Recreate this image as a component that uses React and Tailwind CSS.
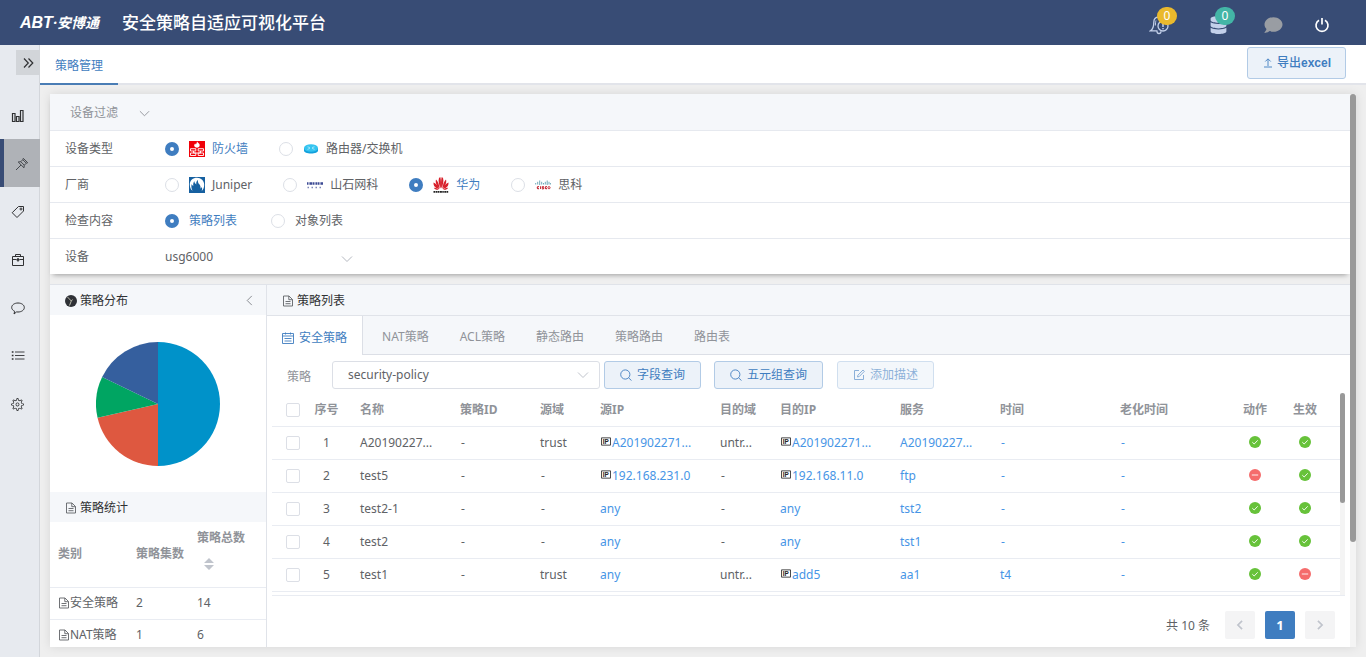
import React from "react";
import { TfiSettings } from "react-icons/tfi";
import { FaDatabase, FaComment } from "react-icons/fa";

const Chevron = ({ className }) => (
  <svg viewBox="0 0 12 12" className={className} fill="none" stroke="currentColor" strokeWidth="1">
    <path d="M1 3.5 6 8.5 11 3.5" />
  </svg>
);

const DocIcon = ({ className }) => (
  <svg viewBox="0 0 12 12" className={className} fill="none" stroke="currentColor" strokeWidth="0.9">
    <path d="M1.500 1h5.500l3.500 3.500v6.500h-9zM6.800 1v3.700h3.700M3.500 6.500h5M3.500 8.700h5" />
  </svg>
);

const PieIcon = () => (
  <svg viewBox="0 0 12 12" className="h-3 w-3">
    <circle cx="6" cy="6" r="6" fill="#2f3136" />
    <path d="M2.500 2 6.300 6 4.500 10.500M6.300 6 7.500 4.500" fill="none" stroke="#c9c9b8" strokeWidth="0.9" />
  </svg>
);

const CalendarIcon = () => (
  <svg viewBox="0 0 12 12" className="h-3 w-3" fill="none" stroke="currentColor" strokeWidth="0.9">
    <path d="M0.500 1.500h11v10H.5zM0.500 4h11M3.500 0.500v2M8.500 0.500v2M2.500 6.500h7M2.500 9h7" />
  </svg>
);

const SearchIcon = () => (
  <svg viewBox="0 0 12 12" className="h-3 w-3" fill="none" stroke="currentColor" strokeWidth="0.9">
    <circle cx="5.300" cy="5.500" r="4.600" />
    <path d="M8.600 8.800 11.500 11.600" />
  </svg>
);

const EditIcon = () => (
  <svg viewBox="0 0 12 12" className="h-3 w-3" fill="none" stroke="currentColor" strokeWidth="1">
    <path d="M6 1.500H1.500v9h9V6M4.500 8l.4-1.800L10 1l1.400 1.300-5.100 5.200z" />
  </svg>
);

const UploadIcon = () => (
  <svg viewBox="0 0 12 12" className="h-3 w-3" fill="none" stroke="currentColor" strokeWidth="0.9">
    <path d="M6 9V2M3.300 4.500 6 1.800l2.700 2.700M2 10h8" />
  </svg>
);

const BellIcon = () => (
  <svg viewBox="0 0 20 20" className="h-5 w-5" fill="none" stroke="#c3d0ea" strokeWidth="1.300">
    <path d="M13 4.500C12.200 3 11 2.200 9.500 2.200 6.500 2.200 4.800 4.500 4.800 7.500c0 4-.6 6.500-3.300 8.300h7M8 16.200c0 1.500.8 2.300 2 2.300s2-.8 2-2.300" />
    <path d="M7 5.500c-.5 1-.5 3-.6 5" strokeWidth="1" />
    <circle cx="14" cy="11" r="5" />
    <path d="M14 8v4M14 13v1.200" strokeWidth="1.500" />
  </svg>
);

const PowerIcon = () => (
  <svg viewBox="0 0 16 16" className="h-4 w-4" fill="none" stroke="#fff" strokeWidth="1.700">
    <path d="M5 3.200a6 6 0 1 0 6 0M8 1v6.500" />
  </svg>
);

const Stroke = ({ children }) => (
  <svg viewBox="0 0 14 14" className="h-[14px] w-[14px]" fill="none" stroke="currentColor" strokeWidth="1">
    {children}
  </svg>
);

const BarsIcon = () => (
  <Stroke>
    <path d="M1.500 4.500h2.500v8H1.500zM5.500 7.500H8v5H5.500zM9.500 1.500H12v11H9.500z" strokeWidth="1.200" />
  </Stroke>
);

const PinIcon = () => (
  <Stroke>
    <path d="M8.300 1.300 12.700 5.700 11.300 6.200 9.300 8.200 9 10.800 3.200 5 5.800 4.700 7.800 2.700zM6 8 1 13M7.800 2.700l3.500 3.500M5.800 4.700 9.300 8.200" />
  </Stroke>
);

const TagIcon = () => (
  <Stroke>
    <path d="M7.500 1.500h5v4.500L6 12.500 1.200 7.700z" strokeLinejoin="round" />
    <circle cx="10" cy="4" r="1" />
  </Stroke>
);

const BriefcaseIcon = () => (
  <Stroke>
    <path d="M1.500 3.500h11v9h-11zM4.500 3.500v-2h5v2M1.500 6.500h4M8.500 6.500h4" />
    <path d="M7 5v3.500M5.500 6.700h3" strokeWidth="1.500" />
  </Stroke>
);

const BubbleIcon = () => (
  <Stroke>
    <path d="M3.700 10.300C1.800 9.500.7 8 .7 6.500.7 3.900 3.500 2 7 2s6.300 1.900 6.300 4.500S10.500 11 7 11c-.5 0-1 0-1.400-.1L3 13z" strokeLinejoin="round" />
  </Stroke>
);

const ListIcon = () => (
  <Stroke>
    <path d="M4 3h9.500M4 6.500h9.500M4 10h9.500" strokeWidth="0.900" />
    <path d="M.8 3h1.700M.8 6.500h1.700M.8 10h1.700" strokeWidth="1.500" />
  </Stroke>
);

const GearIcon = () => <TfiSettings className="h-[13px] w-[13px]" />;

const FirewallIcon = () => (
  <svg viewBox="0 0 16 16" className="h-4 w-4">
    <path d="M0 0h16v16H0z" fill="#f00008" />
    <path d="M8 .3c.3 1.300 3.300 2.200 2.600 4.500C10.200 6.200 9 6.700 8 6.700S5.600 6.200 5.200 4.800c-.2-1 .6-1.600.9-2.300.4.400.6.700.8 1C7.600 2.700 7.900 1.600 8 .3z" fill="#fff" />
    <path d="M1.500 7.700h5.300v2.300H1.500zM9.200 7.700h5.300v2.300H9.200zM4.500 10v2h7v-2M1.500 12h5.300v2.500H1.500zM9.200 12h5.300v2.500H9.200z" fill="none" stroke="#fff" strokeWidth="0.900" />
  </svg>
);

const RouterIcon = () => (
  <svg viewBox="0 0 16 16" className="h-4 w-4">
    <path d="M1 7v2.500C1 11.500 4 12.500 8 12.500s7-1 7-3V7z" fill="#12a0dc" />
    <ellipse cx="8" cy="7" rx="7" ry="3.800" fill="#35c4f0" />
    <path d="M4.500 5.800 7 6.600M11.500 5.800 9 6.600M4.500 8.300 7 7.400M11.500 8.300 9 7.400" stroke="#a5e8fb" strokeWidth="0.900" />
  </svg>
);

const JuniperIcon = () => (
  <svg viewBox="0 0 16 16" className="h-4 w-4">
    <path d="M0 0h16v16H0z" fill="#1660a0" />
    <path d="M.8 7.500C.8 3.500 4 .8 8 .8s7.200 3 7.200 7c0 2.800-1 5-2.700 6.500.8-1.500.8-2.800.3-4.300-.4 1-.8 1.200-1.300 1.500.3-2-.3-3.500-1.500-4.500-.8-1-1.300-2.200-1-4C7.500 4 7 5.500 7.300 7.500 6.300 6.500 5.300 5.500 5.200 4 4.500 5.500 4 7 4.300 9 3.500 8.500 3 8 2.700 7c-.6 2-.4 4.500.8 6.800C1.800 12.500.8 10.200.8 7.500z" fill="#fff" />
  </svg>
);

const HillstoneIcon = () => (
  <svg viewBox="0 0 16 16" className="h-4 w-4">
    <path d="M0 6.500h16" stroke="#3c4a94" strokeWidth="2.600" strokeDasharray="1.500 0.500 0.600 0.400 2 0.500" />
    <path d="M.5 10.500h15" stroke="#7d86b8" strokeWidth="1.500" strokeDasharray="1.500 2.500" />
  </svg>
);

const HuaweiIcon = () => (
  <svg viewBox="0 0 16 16" className="h-4 w-4">
    <g fill="#d8202b">
      <path d="M7.700 11.500C6 8.500 5 4 6 1 6.200.6 7 .3 7.400.3c.6 2.500.8 7.500.3 11.200z" />
      <path d="M8.300 11.500C10 8.500 11 4 10 1 9.800.6 9 .3 8.600.3 8 2.800 7.800 7.800 8.300 11.500z" />
      <path d="M6.800 11.700C4 9.500 2 6 3 2.500 4.800 4 6.300 8 6.800 11.700zM9.200 11.700C12 9.500 14 6 13 2.500 11.200 4 9.700 8 9.200 11.700z" />
      <path d="M6.200 12C3 11.500.3 9.500.5 5.500 3 6.500 5.300 9 6.200 12zM9.800 12c3.200-.5 5.900-2.500 5.700-6.500-2.500 1-4.800 3.500-5.700 6.500z" />
      <path d="M5.800 12.600c-2 .6-3.800 0-5-1.900 1.800-.2 3.600.6 5 1.900zM10.200 12.600c2 .6 3.800 0 5-1.900-1.800-.2-3.600.6-5 1.900z" />
    </g>
    <path d="M.5 14.800h15" stroke="#222" strokeWidth="1.700" strokeDasharray="1.500 0.500 2 0.400" />
  </svg>
);

const CiscoIcon = () => (
  <svg viewBox="0 0 16 16" className="h-4 w-4" fill="none">
    <path d="M.7 6v1.500M2.700 4.800v2.700M4.700 3.500v4.500M6.700 4.800v2.700M8.500 6v1.500M10.300 4.800v2.700M12.200 3.500v4.500M14 4.800v2.700M15.600 6v1.500" stroke="#5f9fb0" strokeWidth="0.900" />
    <path d="M4 9.700c-2-.5-2.500 2.300 0 2M5.600 9.300v2.700M8.800 9.700c-1.700-.4-1.700.7-.7 1 1 .4.6 1.400-1 1M12 9.700c-2-.5-2.500 2.300 0 2" stroke="#c8323c" strokeWidth="1.200" />
    <circle cx="14" cy="10.700" r="1.100" stroke="#c8323c" />
  </svg>
);

const OkIcon = () => (
  <svg viewBox="0 0 12 12" className="mx-auto mb-0.5 h-3 w-3" role="img" aria-label="ok">
    <circle cx="6" cy="6" r="6" fill="#67c23a" />
    <path d="M3.300 6.200 5.200 8 8.700 4.300" fill="none" stroke="#fff" strokeWidth="0.900" />
  </svg>
);

const NoIcon = () => (
  <svg viewBox="0 0 12 12" className="mx-auto mb-0.5 h-3 w-3" role="img" aria-label="no">
    <circle cx="6" cy="6" r="6" fill="#f56c6c" />
    <path d="M2.800 6h6.400" stroke="#fff" strokeWidth="0.900" />
  </svg>
);

const navItems = [
  { icon: BarsIcon, label: "bar chart" },
  { icon: PinIcon, label: "pin", active: true },
  { icon: TagIcon, label: "tag" },
  { icon: BriefcaseIcon, label: "briefcase" },
  { icon: BubbleIcon, label: "comment" },
  { icon: ListIcon, label: "list" },
  { icon: GearIcon, label: "settings" },
];

const distribution = [
  { value: 14, color: "#0092c9" },
  { value: 6, color: "#de5840" },
  { value: 3, color: "#00a562" },
  { value: 5, color: "#355f9e" },
];

function PieChart() {
  const total = distribution.reduce((sum, d) => sum + d.value, 0);
  const point = (v) => {
    const a = (v / total) * Math.PI * 2;
    return `${62 + 62 * Math.sin(a)} ${62 - 62 * Math.cos(a)}`;
  };
  let start = 0;
  return (
    <svg viewBox="0 0 124 124" className="h-[124px] w-[124px]">
      {distribution.map((d) => {
        const from = start;
        start += d.value;
        return <path key={d.color} fill={d.color} d={`M62 62L${point(from)}A62 62 0 0 1 ${point(start)}Z`} />;
      })}
    </svg>
  );
}

function Radio({ name, label, icon: Icon, checked }) {
  return (
    <label className={`flex items-center ${checked ? "text-[#3f7dc0]" : "text-[#606266]"}`}>
      <input
        type="radio"
        name={name}
        defaultChecked={checked}
        className="mr-[10px] h-[14px] w-[14px] appearance-none rounded-full border border-[#dcdfe6] bg-white checked:border-[5px] checked:border-[#3f7dc0]"
      />
      {Icon && (
        <span className="mr-[7px]">
          <Icon />
        </span>
      )}
      {label}
    </label>
  );
}

function FilterRow({ label, children, gap = "gap-[31px]" }) {
  return (
    <div className="flex h-9 items-center border-t border-[#e6e9ef] pl-[15px]">
      <span className="w-[100px] text-[#606266]">{label}</span>
      <div className={`flex items-center ${gap}`}>{children}</div>
    </div>
  );
}

const IpBadge = () => (
  <svg viewBox="0 0 11 9" className="mr-px mb-1 ml-px inline-block h-[9px] w-[10px]">
    <path d="M.5.5h10v8H.5z" fill="#fff" stroke="#333" />
    <text x="2" y="7" fontSize="7" fontWeight="700" fontFamily="Liberation Sans, sans-serif" fill="#222">IP</text>
  </svg>
);

const columns = ["序号", "名称", "策略ID", "源域", "源IP", "目的域", "目的IP", "服务", "时间", "老化时间", "动作", "生效"];

const rows = [
  { name: "A20190227...", srcZone: "trust", src: "A201902271...", srcIp: true, dstZone: "untr...", dst: "A201902271...", dstIp: true, service: "A20190227...", time: "-", action: true, active: true },
  { name: "test5", srcZone: "-", src: "192.168.231.0", srcIp: true, dstZone: "-", dst: "192.168.11.0", dstIp: true, service: "ftp", time: "-", action: false, active: true },
  { name: "test2-1", srcZone: "-", src: "any", dstZone: "-", dst: "any", service: "tst2", time: "-", action: true, active: true },
  { name: "test2", srcZone: "-", src: "any", dstZone: "-", dst: "any", service: "tst1", time: "-", action: true, active: true },
  { name: "test1", srcZone: "trust", src: "any", dstZone: "untr...", dst: "add5", dstIp: true, service: "aa1", time: "t4", action: true, active: false },
];

const Dash = () => <span className="px-px">-</span>;
const Plain = ({ text }) => (text === "-" ? <Dash /> : text);
const Link = ({ text }) => (
  <a href="#" className="text-[#4795e6]">
    <Plain text={text} />
  </a>
);

const Check = ({ label }) => (
  <input
    type="checkbox"
    aria-label={label}
    className="block h-[14px] w-[14px] appearance-none rounded-[2px] border border-[#dcdfe6] bg-white checked:bg-[#3f7dc0]"
  />
);

const queryButton =
  "flex h-7 items-center gap-[5px] rounded-[3px] border border-[#b2cbe6] bg-[#ecf2f9] px-[15px] text-[#3f7dc0]";

function Header() {
  return (
    <header className="flex h-[45px] shrink-0 items-center bg-[#384c75] pl-5 text-white">
      <div className="flex w-[102px] items-center text-sm font-bold italic">
        <span className="font-['Liberation_Sans'] text-base leading-5">ABT</span>
        <span>·安博通</span>
      </div>
      <h1 className="flex-1 text-[17px] font-medium">安全策略自适应可视化平台</h1>
      <div className="flex items-center pt-1">
        <button className="relative mr-[41px]" aria-label="alarms">
          <BellIcon />
          <span className="absolute -top-2 left-2 h-[18px] w-5 rounded-full bg-[#eab92d] text-center text-xs leading-[18px]">0</span>
        </button>
        <button className="relative mr-[37px]" aria-label="storage">
          <FaDatabase className="h-[18px] w-[17px] text-[#c3d0ea]" />
          <span className="absolute -top-[9px] left-[5px] h-[18px] w-5 rounded-full bg-[#43b5a6] text-center text-xs leading-[18px]">0</span>
        </button>
        <button className="mr-[31px]" aria-label="messages">
          <FaComment className="h-[18px] w-[19px] text-[#999da3]" />
        </button>
        <button className="mr-9" aria-label="power">
          <PowerIcon />
        </button>
      </div>
    </header>
  );
}

function Sidebar() {
  return (
    <nav className="flex w-10 shrink-0 flex-col border-r border-[#d3d6db] bg-[#e7eaef] pt-[5px] text-[#303133]">
      <button className="-mr-px mb-[16px] flex h-[25px] w-6 items-center justify-center self-end bg-[#d2d5d9]" aria-label="expand">
        <svg viewBox="0 0 12 12" className="h-3 w-3" fill="none" stroke="currentColor" strokeWidth="1.200">
          <path d="M2 1.500 6.300 6 2 10.500M6.500 1.500 10.800 6 6.500 10.500" />
        </svg>
      </button>
      {navItems.map(({ icon: Icon, label, active }) => (
        <button
          key={label}
          aria-label={label}
          className={`-mr-px flex h-12 items-center border-l-4 pt-0.5 ${
            active ? "border-[#384c75] bg-[#afb2b7] pl-[11px] text-[#45484d]" : "border-transparent pl-[7px]"
          }`}
        >
          <Icon />
        </button>
      ))}
    </nav>
  );
}

function Filters() {
  return (
    <section className="shrink-0 bg-white shadow-[0_4px_5px_-3px_rgba(0,0,0,0.35)]">
      <button className="flex h-9 w-full items-center gap-[21px] bg-[#f5f7fa] pt-0.5 pl-5 text-[#909399]">
        设备过滤
        <Chevron className="h-[11px] w-[11px]" />
      </button>
      <FilterRow label="设备类型">
        <Radio name="type" label="防火墙" icon={FirewallIcon} checked />
        <Radio name="type" label="路由器/交换机" icon={RouterIcon} />
      </FilterRow>
      <FilterRow label="厂商">
        <Radio name="vendor" label="Juniper" icon={JuniperIcon} />
        <Radio name="vendor" label="山石网科" icon={HillstoneIcon} />
        <Radio name="vendor" label="华为" icon={HuaweiIcon} checked />
        <Radio name="vendor" label="思科" icon={CiscoIcon} />
      </FilterRow>
      <FilterRow label="检查内容" gap="gap-[34px]">
        <Radio name="content" label="策略列表" checked />
        <Radio name="content" label="对象列表" />
      </FilterRow>
      <FilterRow label="设备">
        <div className="relative w-[200px]">
          <select aria-label="设备" className="w-full appearance-none bg-transparent text-[#606266]">
            <option>usg6000</option>
          </select>
          <Chevron className="pointer-events-none absolute top-1.5 right-3 h-3 w-3 text-[#b4b8c0]" />
        </div>
      </FilterRow>
    </section>
  );
}

function Distribution() {
  return (
    <aside className="flex w-[217px] shrink-0 flex-col overflow-hidden border-r border-[#e0e3e9]">
      <div className="flex h-[30px] shrink-0 items-center gap-[3px] bg-[#f5f7fa] pt-px pr-[11px] pl-[15px] text-[#303133]">
        <PieIcon />
        <h2 className="flex-1">策略分布</h2>
        <button aria-label="collapse">
          <Chevron className="h-[11px] w-[11px] rotate-90 text-[#808389]" />
        </button>
      </div>
      <div className="flex h-[177px] shrink-0 items-center justify-center">
        <PieChart />
      </div>
      <div className="flex h-[30px] shrink-0 items-center gap-[3px] bg-[#f5f7fa] pt-px pl-[15px] text-[#303133]">
        <DocIcon className="h-3 w-3 text-[#606266]" />
        <h2>策略统计</h2>
      </div>
      <table className="w-full table-fixed text-left text-[#606266]">
        <colgroup>
          <col className="w-[78px]" />
          <col className="w-[61px]" />
          <col />
        </colgroup>
        <thead>
          <tr className="h-[65px] border-b border-[#e9ecf2] text-[#909399]">
            <th className="pl-2 font-bold">类别</th>
            <th className="pl-2 font-bold">策略集数</th>
            <th className="pt-[6px] pl-2 align-top font-bold">
              策略总数
              <svg viewBox="0 0 10 12" className="mt-[10px] ml-[7px] block h-3 w-[10px]" fill="#c0c4cc">
                <path d="M0 5 5 0l5 5zM0 7h10l-5 5z" />
              </svg>
            </th>
          </tr>
        </thead>
        <tbody>
          {[
            ["安全策略", 2, 14],
            ["NAT策略", 1, 6],
          ].map(([name, sets, total]) => (
            <tr key={name} className="h-8 border-b border-[#e9ecf2]">
              <td className="pl-2 whitespace-nowrap">
                <span className="flex items-center">
                  <DocIcon className="h-3 w-3" />
                  {name}
                </span>
              </td>
              <td className="pl-2">{sets}</td>
              <td className="pl-2">{total}</td>
            </tr>
          ))}
        </tbody>
      </table>
    </aside>
  );
}

function PolicyTable() {
  return (
    <div className="mr-[5px] ml-[5px] flex h-[203px] shrink-0 overflow-hidden border-b border-[#e9ecf2]">
      <div className="min-w-0 flex-1">
        <table className="w-full table-fixed text-left text-[#606266]">
          <colgroup>
            <col className="w-[31px]" />
            <col className="w-[47px]" />
            <col className="w-[100px]" />
            <col className="w-[80px]" />
            <col className="w-[60px]" />
            <col className="w-[120px]" />
            <col className="w-[60px]" />
            <col className="w-[120px]" />
            <col className="w-[100px]" />
            <col className="w-[120px]" />
            <col />
            <col className="w-[50px]" />
            <col className="w-[50px]" />
            <col className="w-[10px]" />
          </colgroup>
          <thead>
            <tr className="h-[33px] border-b border-[#e9ecf2] text-[#909399]">
              <th className="pt-0.5 pl-[14px]">
                <Check label="all" />
              </th>
              {columns.map((c, i) => (
                <th key={c} className={`pt-0.5 font-bold whitespace-nowrap ${i === 0 || i > 9 ? "text-center" : "pl-[10px]"}`}>
                  {c}
                </th>
              ))}
              <th />
            </tr>
          </thead>
          <tbody>
            {rows.map((r, i) => (
              <tr key={r.name} className="h-[33px] border-b border-[#e9ecf2] whitespace-nowrap">
                <td className="pl-[14px]">
                  <Check label={r.name} />
                </td>
                <td className="text-center">{i + 1}</td>
                <td className="pl-[10px]">{r.name}</td>
                <td className="pl-[10px]"><Dash /></td>
                <td className="pl-[10px]"><Plain text={r.srcZone} /></td>
                <td className="pl-[10px]">{r.srcIp && <IpBadge />}<Link text={r.src} /></td>
                <td className="pl-[10px]"><Plain text={r.dstZone} /></td>
                <td className="pl-[10px]">{r.dstIp && <IpBadge />}<Link text={r.dst} /></td>
                <td className="pl-[10px]"><Link text={r.service} /></td>
                <td className="pl-[10px]"><Link text={r.time} /></td>
                <td className="pl-[10px]"><Link text="-" /></td>
                <td>{r.action ? <OkIcon /> : <NoIcon />}</td>
                <td>{r.active ? <OkIcon /> : <NoIcon />}</td>
                <td />
              </tr>
            ))}
          </tbody>
        </table>
      </div>
      <div className="w-[5px] bg-[#f4f4f4]">
        <div className="h-[110px] rounded-full bg-[#999]" />
      </div>
    </div>
  );
}

function PolicyList() {
  return (
    <section className="flex min-w-0 flex-1 flex-col">
      <div className="flex h-[31px] shrink-0 items-center gap-[3px] border-b border-[#e0e3e9] bg-[#f5f7fa] pt-px pl-[15px] text-[#303133]">
        <DocIcon className="h-3 w-3 text-[#606266]" />
        <h2>策略列表</h2>
      </div>
      <div className="flex h-[39px] shrink-0 text-[#909399]">
        <button className="flex items-center gap-[5px] border-r border-[#dcdfe6] bg-white px-[15px] pt-1 text-[#3f7dc0]">
          <CalendarIcon />
          安全策略
        </button>
        <div className="flex flex-1 items-center gap-[31px] border-b border-[#dcdfe6] bg-[#f5f7fa] pt-1 pl-[19px]">
          {["NAT策略", "ACL策略", "静态路由", "策略路由", "路由表"].map((t) => (
            <button key={t}>{t}</button>
          ))}
        </div>
      </div>
      <div className="flex h-[38px] shrink-0 items-center pt-px pl-5">
        <label htmlFor="policy" className="w-[45px] pt-1 text-[#909399]">策略</label>
        <div className="relative mr-1 w-[268px]">
          <select
            id="policy"
            className="block h-7 w-full appearance-none rounded-[3px] border border-[#dcdfe6] bg-white pl-[15px] text-[#606266]"
          >
            <option>security-policy</option>
          </select>
          <Chevron className="pointer-events-none absolute top-2 right-[11px] h-3 w-3 text-[#c0c4cc]" />
        </div>
        <button className={`${queryButton} mr-[13px]`}>
          <SearchIcon />
          字段查询
        </button>
        <button className={`${queryButton} mr-[14px]`}>
          <SearchIcon />
          五元组查询
        </button>
        <button className={`${queryButton} opacity-60`} disabled>
          <EditIcon />
          添加描述
        </button>
      </div>
      <PolicyTable />
      <div className="mt-[15px] mr-[15px] flex h-7 shrink-0 items-center justify-end gap-[10px] text-[#606266]">
        <span className="mr-[5px] pt-0.5">共 10 条</span>
        <button className="flex h-7 w-[30px] items-center justify-center rounded-[2px] bg-[#f4f4f5] text-[#c0c4cc]" aria-label="previous">
          <Chevron className="h-[10px] w-[10px] rotate-90 stroke-2" />
        </button>
        <button className="h-7 w-[30px] rounded-[2px] bg-[#3f7dc0] text-[13px] font-bold text-white">1</button>
        <button className="flex h-7 w-[30px] items-center justify-center rounded-[2px] bg-[#f4f4f5] text-[#c0c4cc]" aria-label="next">
          <Chevron className="h-[10px] w-[10px] -rotate-90 stroke-2" />
        </button>
      </div>
    </section>
  );
}

export default function App() {
  return (
    <div className="flex h-screen flex-col bg-[#efefef] font-['Noto_Sans','Noto_Sans_CJK_SC',sans-serif] text-xs leading-5">
      <Header />
      <div className="flex min-h-0 flex-1">
        <Sidebar />
        <div className="flex min-w-0 flex-1 flex-col">
          <div className="flex h-10 shrink-0 items-start justify-between border-b-2 border-[#e2e4ea] bg-white">
            <button className="-mb-0.5 h-10 border-b-2 border-[#4a7db5] px-[15px] pt-1 text-[#3f7dc0]">策略管理</button>
            <button className="mt-0.5 mr-5 flex h-8 items-center gap-[3px] rounded-[3px] border border-[#b2cbe6] bg-[#ecf2f9] px-[14px] font-['Liberation_Sans','Noto_Sans_CJK_SC',sans-serif] font-bold text-[#3f7dc0]">
              <UploadIcon />
              <span><span className="font-medium">导出</span>excel</span>
            </button>
          </div>
          <main className="flex min-h-0 flex-1 px-[10px] pt-[9px] pb-[10px]">
            <div className="flex min-h-0 min-w-0 flex-1 shadow-[0_0_10px_rgba(0,0,0,0.1)]">
              <div className="flex min-w-0 flex-1 flex-col gap-[10px]">
                <Filters />
                <div className="flex min-h-0 flex-1 overflow-hidden border-t border-[#e0e3e9] bg-white">
                  <Distribution />
                  <PolicyList />
                </div>
              </div>
              <div className="w-1.5 bg-[#f4f4f4]">
                <div className="h-[81%] rounded-full bg-[#999]" />
              </div>
            </div>
          </main>
        </div>
      </div>
    </div>
  );
}
